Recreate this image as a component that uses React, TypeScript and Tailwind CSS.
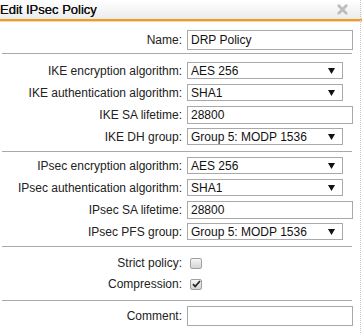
import React from "react";

const Label = ({ children }: { children: React.ReactNode }) => (
  <div className="w-[187px] shrink-0 text-right pr-[5px] text-[12px] text-[#222] leading-none">{children}</div>
);

const Sel = ({ v }: { v: string }) => (
  <div className="w-[156px] h-[17px] border border-[#a9a9a9] bg-white flex items-center pl-[3px] pr-[7px] text-[12px] text-[#111] leading-none">
    <span className="flex-1">{v}</span>
    <svg width="7" height="6" viewBox="0 0 7 6"><path d="M0 0h7L3.5 6z" fill="#111" /></svg>
  </div>
);

const Inp = ({ v, h = "h-[19px]" }: { v: string; h?: string }) => (
  <div className={`w-[166px] ${h} border border-[#a9a9a9] bg-white flex items-center pl-[3px] text-[12px] text-[#111] leading-none`}>{v}</div>
);

const Row = ({ label, children, cls = "" }: { label: string; children: React.ReactNode; cls?: string }) => (
  <div className={`flex items-center ${cls}`}>
    <Label>{label}</Label>
    {children}
  </div>
);

const Sep = ({ cls = "" }: { cls?: string }) => <div className={`ml-[2px] w-[350px] h-px bg-[#aaa] ${cls}`} />;

const Check = ({ checked }: { checked?: boolean }) => (
  <div className="ml-[3px] w-[12px] h-[11px] rounded-[2px] border border-[#a0a0a0] bg-gradient-to-b from-[#f6f6f6] to-[#d4d4d4] flex items-center justify-center">
    {checked && (
      <svg width="9" height="8" viewBox="0 0 9 8"><path d="M1 4.2l2.2 2.3L8 1" stroke="#222" strokeWidth="1.8" fill="none" /></svg>
    )}
  </div>
);

export default function App() {
  return (
    <div className="w-[362px] h-[333px] bg-white relative overflow-hidden" style={{ fontFamily: "'Liberation Sans', Arial, sans-serif" }}>
      <div className="absolute right-[1px] top-0 bottom-0 border-r border-dotted border-[#c8c8c8]" />
      <div className="h-[19px] bg-gradient-to-b from-white to-[#ececec] flex items-center justify-between pr-[14px]">
        <span className="text-[13px] text-[#111] leading-none [text-shadow:0_0_0.4px_#111]">Edit IPsec Policy</span>
        <svg width="11" height="11" viewBox="0 0 11 11"><path d="M1.8 1.8l7.4 7.4M9.2 1.8l-7.4 7.4" stroke="#bdbdbd" strokeWidth="2.8" strokeLinecap="round" /></svg>
      </div>
      <div className="h-[2px] bg-[#eb9c2c]" />
      <div className="h-px bg-[#f6d8a8]" />
      <div className="pt-[8px]">
        <Row label="Name:"><Inp v="DRP Policy" h="h-[20px]" /></Row>
        <Sep cls="mt-[3px]" />
        <Row label="IKE encryption algorithm:" cls="mt-[8px]"><Sel v="AES 256" /></Row>
        <Row label="IKE authentication algorithm:" cls="mt-[5px]"><Sel v="SHA1" /></Row>
        <Row label="IKE SA lifetime:" cls="mt-[5px]"><Inp v="28800" h="h-[18px]" /></Row>
        <Row label="IKE DH group:" cls="mt-[4px]"><Sel v="Group 5: MODP 1536" /></Row>
        <Sep cls="mt-[6px]" />
        <Row label="IPsec encryption algorithm:" cls="mt-[5px]"><Sel v="AES 256" /></Row>
        <Row label="IPsec authentication algorithm:" cls="mt-[5px]"><Sel v="SHA1" /></Row>
        <Row label="IPsec SA lifetime:" cls="mt-[5px]"><Inp v="28800" h="h-[18px]" /></Row>
        <Row label="IPsec PFS group:" cls="mt-[4px]"><Sel v="Group 5: MODP 1536" /></Row>
        <Sep cls="mt-[6px]" />
        <Row label="Strict policy:" cls="mt-[10px]"><Check /></Row>
        <Row label="Compression:" cls="mt-[9px]"><Check checked /></Row>
        <Sep cls="mt-[10px]" />
        <Row label="Comment:" cls="mt-[5px]"><Inp v="" h="h-[20px]" /></Row>
      </div>
    </div>
  );
}
